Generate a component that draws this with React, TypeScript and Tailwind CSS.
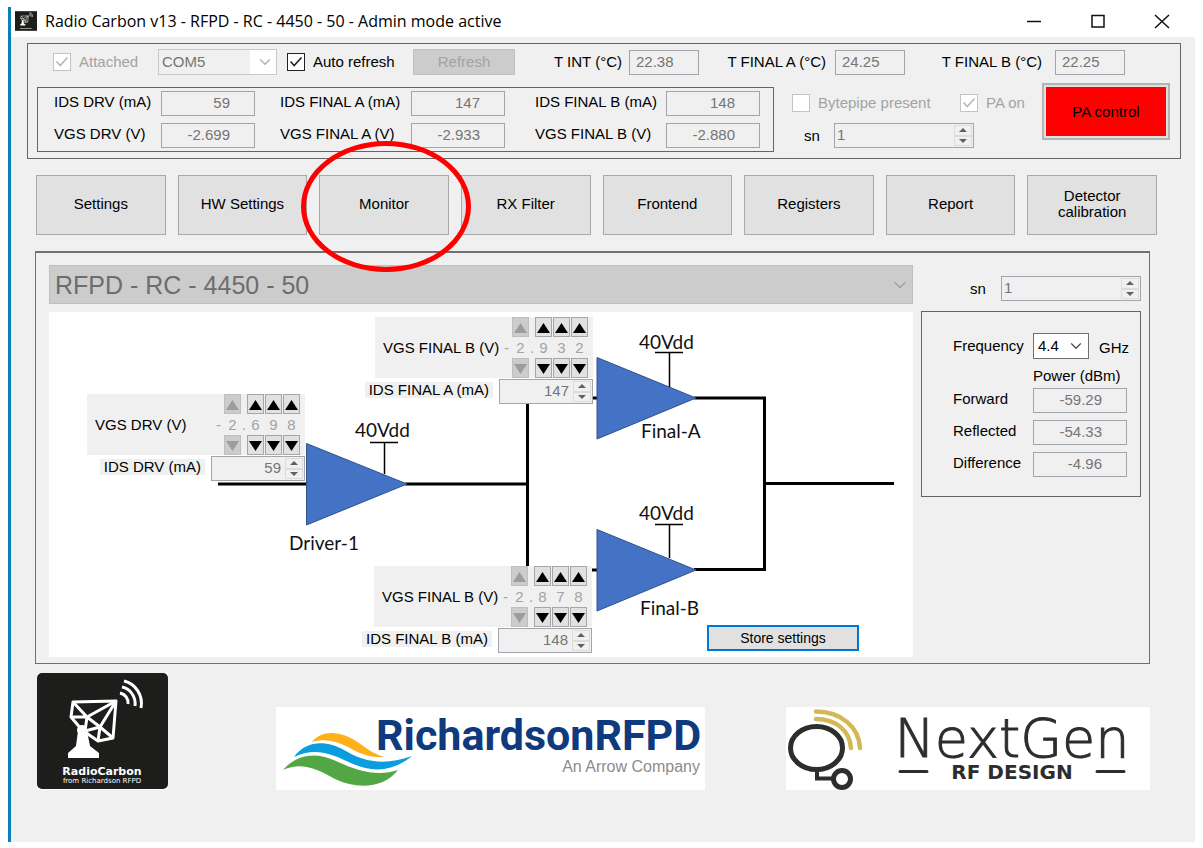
import React, { useId } from "react";
import { ChevronDown } from "lucide-react";

const noop = () => {};

function Tick({ label, checked, disabled }: { label: string; checked?: boolean; disabled?: boolean }) {
  return (
    <label className={disabled ? "flex items-center gap-2 text-[#a3a3a3]" : "flex items-center gap-2 text-black"}>
      <span className="relative block size-[18px]">
        <input
          type="checkbox"
          checked={!!checked}
          disabled={disabled}
          onChange={noop}
          className="block size-[18px] appearance-none border border-[#222] bg-white disabled:border-[#c4c4c4]"
        />
        {checked && (
          <svg viewBox="0 0 18 18" className="pointer-events-none absolute inset-0 size-[18px]" fill="none" stroke={disabled ? "#b8b8b8" : "#222"} strokeWidth="1.6">
            <path d="M3.5 8.5 7.2 12.5 14.5 4.5" />
          </svg>
        )}
      </span>
      {label}
    </label>
  );
}

function ReadOut({ id, value, className }: { id: string; value: string; className: string }) {
  return (
    <input
      id={id}
      value={value}
      disabled
      readOnly
      className={"h-[25px] border border-[#a4a4ac] bg-[#f0f0f0] pb-[2px] text-[#757575] " + className}
    />
  );
}

function Numeric({ id, value, className, inputClass }: { id: string; value: string; className: string; inputClass: string }) {
  return (
    <div className={"flex h-[25px] border border-[#a4a4ac] bg-[#f0f0f0] p-px " + className}>
      <input id={id} value={value} disabled readOnly className={"min-w-0 flex-1 bg-transparent pb-[2px] text-[#757575] " + inputClass} />
      <div className="grid w-[18px] shrink-0 grid-rows-2">
        <button type="button" aria-label="Increase" className="flex items-center justify-center border border-[#dcdcdc]">
          <svg width="8" height="4" viewBox="0 0 8 4"><path d="M0 4 4 0 8 4Z" fill="#606060" /></svg>
        </button>
        <button type="button" aria-label="Decrease" className="flex items-center justify-center border border-[#dcdcdc]">
          <svg width="8" height="4" viewBox="0 0 8 4"><path d="M0 0 4 4 8 0Z" fill="#606060" /></svg>
        </button>
      </div>
    </div>
  );
}

function Measure({ label, value, className, labelClass }: { label: string; value: string; className: string; labelClass: string }) {
  const id = useId();
  return (
    <div className={"flex " + className}>
      <label htmlFor={id} className={"pt-px " + labelClass}>{label}</label>
      <ReadOut id={id} value={value} className="w-[94px] pr-6 text-right" />
    </div>
  );
}

function Temperature({ label, value, className }: { label: string; value: string; className: string }) {
  const id = useId();
  return (
    <>
      <label htmlFor={id} className={"shrink-0 text-right " + className}>{label}</label>
      <ReadOut id={id} value={value} className="w-[70px] pl-[6px]" />
    </>
  );
}

function Arrow({ down, disabled }: { down?: boolean; disabled?: boolean }) {
  return (
    <button
      type="button"
      disabled={disabled}
      aria-label={down ? "Decrease digit" : "Increase digit"}
      className="flex h-5 w-[17px] items-center justify-center border border-[#a6a6a6] bg-[#e1e1e1] text-black disabled:border-[#bfbfbf] disabled:bg-[#cccccc] disabled:text-[#9d9d9d]"
    >
      <svg width="13" height="11" viewBox="0 0 13 11" className="shrink-0">
        <path d={down ? "M0 1H13L6.5 11Z" : "M0 11H13L6.5 1Z"} fill="currentColor" />
      </svg>
    </button>
  );
}

function Digit({ value, disabled }: { value: string; disabled?: boolean }) {
  return (
    <div className="flex w-[17px] flex-col items-center">
      <Arrow disabled={disabled} />
      <span className="h-[21px] leading-[22px]">{value}</span>
      <Arrow down disabled={disabled} />
    </div>
  );
}

function Bias({ title, digits, idsLabel, ids, place }: { title: string; digits: string; idsLabel: string; ids: string; place: string }) {
  const id = useId();
  return (
    <div className={"absolute w-[218px] " + place}>
      <div className="flex h-[61px] items-center bg-[#f0f0f0] pl-2 text-[#a3a3a3]">
        <span className="flex-1 text-black">{title}</span>
        <span className="w-2">-</span>
        <Digit value={digits[0]} disabled />
        <span className="w-[6px] text-center">.</span>
        <div className="mr-[5px] flex gap-px">
          {digits.slice(1).split("").map((d, i) => (
            <Digit key={i} value={d} />
          ))}
        </div>
      </div>
      <div className="flex items-start justify-end gap-[6px] pt-px">
        <label htmlFor={id} className="mt-[3px] shrink-0 bg-[#f0f0f0] px-1 leading-4">{idsLabel}</label>
        <Numeric id={id} value={ids} className="w-[94px] shrink-0" inputClass="pr-[4px] text-right" />
      </div>
    </div>
  );
}

function Diagram() {
  return (
    <svg width="864" height="345" viewBox="49 312 864 345" className="block shrink-0">
      <g fill="none" stroke="#000" strokeWidth="3">
        <path d="M218 484H307M405 484H527M527.5 400V568M592 398H598M592 570H598M694 398H764.5V569.5H694M764 483.5H894" />
      </g>
      <g fill="#4472c4" stroke="#2f528f" strokeWidth="1">
        <path d="M306.500 443.500 407 484 306.500 525Z" />
        <path d="M597 357.500 696 398 597 439Z" />
        <path d="M597 529.500 696 570 597 611Z" />
      </g>
      <path d="M370 442.500H398M384.500 442V474M655 352.500H683M669.500 352V387M655 524.500H683M669.500 524V558" fill="none" stroke="#000" strokeWidth="1.500" />
      <g className="font-['Lato',sans-serif] text-[19px]" fill="#111">
        <text x="355" y="437">40Vdd</text>
        <text x="639" y="349">40Vdd</text>
        <text x="639" y="520">40Vdd</text>
        <text x="289" y="550">Driver-1</text>
        <text x="641" y="438">Final-A</text>
        <text x="640" y="615">Final-B</text>
      </g>
    </svg>
  );
}

function Dish() {
  return (
    <>
      <g fill="none" stroke="#fff" strokeWidth="3" strokeLinejoin="round">
        <path d="M36 29 79 28 76 65 61 68 45 57 34 44Z" />
        <path d="M36 29 50 44 63 54 76 65M79 28 50 44 34 44M79 28 63 54 61 68M50 44 48 58 63 54" />
      </g>
      <circle cx="45" cy="57" r="5" fill="#fff" />
      <path d="M41 58H50L53 73 62 80V85H31V80L39 73Z" fill="#fff" />
      <g fill="none" stroke="#fff" strokeWidth="3">
        <path d="M83 20A10 10 0 0 1 91 31M85 14A16 17 0 0 1 98 33M87 8A22 23 0 0 1 104 35" />
      </g>
    </>
  );
}

function RadioCarbonLogo() {
  return (
    <svg width="131" height="117" viewBox="0 0 131 117" role="img" aria-label="RadioCarbon">
      <rect width="131" height="117" fill="#fff" />
      <rect width="131" height="116" rx="5" fill="#1d1d1b" />
      <Dish />
      <g fill="#fff" textAnchor="middle">
        <text x="65" y="102" className="font-['DejaVu_Sans',sans-serif] text-[11px] font-bold">RadioCarbon</text>
        <text x="65" y="110" className="font-['DejaVu_Sans',sans-serif] text-[7px]">from Richardson RFPD</text>
      </g>
    </svg>
  );
}

function RichardsonLogo() {
  return (
    <svg width="429" height="83" viewBox="0 0 429 83" role="img" aria-label="RichardsonRFPD">
      <rect width="429" height="83" fill="#fff" />
      <path d="M36 35C46 22 66 24 83 36C92 43 101 48 108 50C96 51 84 47 74 41C61 34 48 31 36 35Z" fill="#fdb019" />
      <path d="M18 50C31 32 52 34 68 43C88 55 108 59 136 49C118 64 98 66 77 57C58 48 40 39 18 50Z" fill="#0a9ede" />
      <path d="M7 63C22 46 41 45 60 54C81 64 102 70 122 63C108 81 82 83 59 72C39 61 25 55 7 63Z" fill="#52a744" />
      <text x="100" y="43" className="font-['Roboto',sans-serif] text-[43px] font-bold" fill="#0f3a7d">RichardsonRFPD</text>
      <text x="424" y="65" textAnchor="end" className="font-['Liberation_Sans',sans-serif] text-[16px]" fill="#8c8c8c">An Arrow Company</text>
    </svg>
  );
}

function NextGenLogo() {
  return (
    <svg width="364" height="83" viewBox="0 0 364 83" role="img" aria-label="NextGen RF Design">
      <rect width="364" height="83" fill="#fff" />
      <g fill="none" stroke="#2d2d2d" strokeWidth="5">
        <ellipse cx="30.500" cy="41" rx="26" ry="21.500" />
        <circle cx="56" cy="72" r="8.500" />
        <path d="M31 63V71.500H47" strokeWidth="4" />
      </g>
      <g fill="none" stroke="#d3b955" strokeWidth="4.500" strokeLinecap="round">
        <path d="M30 4.500C55 4.500 73 20 74 41M30 12C50 12 64 24 65 41" />
      </g>
      <text x="226" y="50" textAnchor="middle" className="font-['DejaVu_Sans',sans-serif] text-[54px] font-extralight" fill="#2d2d2d" stroke="#2d2d2d" strokeWidth="1">NextGen</text>
      <path d="M114 64.500H141M311 64.500H338" stroke="#2d2d2d" strokeWidth="3" strokeLinecap="round" />
      <text x="226" y="72" textAnchor="middle" className="font-['DejaVu_Sans',sans-serif] text-[20px] font-bold" fill="#2d2d2d">RF DESIGN</text>
    </svg>
  );
}

const pages = ["Settings", "HW Settings", "Monitor", "RX Filter", "Frontend", "Registers", "Report", "Detector calibration"];

export default function App() {
  return (
    <div className="flex min-h-screen bg-white pt-[7px] pr-2 pb-[6px] pl-2 font-['Liberation_Sans',Arial,sans-serif] text-[15px] leading-5 text-black">
      <div className="flex min-w-0 flex-1 flex-col border-l-[3px] border-[#0b7fb8]">
        <header className="flex h-[30px] items-center bg-white pb-[3px] pl-1">
          <svg width="22" height="20" viewBox="0 0 131 117" aria-hidden="true">
            <rect width="131" height="117" fill="#1d1d1b" />
            <Dish />
            <path d="M30 103H100" stroke="#aaa" strokeWidth="5" />
          </svg>
          <h1 className="ml-2 flex-1 font-['Open_Sans','Noto_Sans',sans-serif] text-[16px]">Radio Carbon v13 - RFPD - RC - 4450 - 50 - Admin mode active</h1>
          <div className="mr-[25px] flex items-center gap-[48px]">
            <button type="button" aria-label="Minimize" className="block size-4">
              <svg viewBox="0 0 16 16"><path d="M1 8.500H15" stroke="#111" strokeWidth="1.500" /></svg>
            </button>
            <button type="button" aria-label="Maximize" className="block size-4">
              <svg viewBox="0 0 16 16"><path d="M2 2.500H14V14H2Z" stroke="#111" strokeWidth="1.500" fill="none" /></svg>
            </button>
            <button type="button" aria-label="Close" className="block size-4">
              <svg viewBox="0 0 16 16"><path d="M1 2 15 15M15 2 1 15" stroke="#111" strokeWidth="1.500" /></svg>
            </button>
          </div>
        </header>

        <div className="flex-1 bg-[#f0f0f0] pt-[6px] pr-[14px] pl-4">
          <section className="border border-[#646464] pt-1 pb-[6px]">
            <div className="flex h-7 items-center pl-[25px]">
              <div className="w-[105px] shrink-0"><Tick label="Attached" checked disabled /></div>
              <div className="relative w-[119px] shrink-0">
                <select aria-label="Port" disabled className="h-[26px] w-full appearance-none border border-[#c8c8c8] bg-white bg-linear-to-r from-[#f0f0f0] from-78% to-white to-78% pl-[3px] text-[#757575] opacity-100">
                  <option>COM5</option>
                </select>
                <ChevronDown size={18} strokeWidth={1.75} className="pointer-events-none absolute top-1 right-[3px] text-[#b0b0b0]" />
              </div>
              <div className="ml-[10px] w-[126px] shrink-0"><Tick label="Auto refresh" checked /></div>
              <button type="button" disabled className="h-[26px] w-[102px] shrink-0 border border-[#bfbfbf] bg-[#cccccc] text-[#a3a3a3]">Refresh</button>
              <Temperature label="T INT (°C)" value="22.38" className="mr-[7px] w-[107px]" />
              <Temperature label="T FINAL A (°C)" value="24.25" className="mr-[9px] w-[127px]" />
              <Temperature label="T FINAL B (°C)" value="22.25" className="mr-[13px] w-[137px]" />
            </div>
            <div className="mt-[11px] ml-[9px] flex items-start">
              <div className="grid w-[737px] shrink-0 gap-[7px] border border-[#646464] py-[3px] pl-4">
                <div className="flex">
                  <Measure label="IDS DRV (mA)" value="59" className="mr-[25px]" labelClass="w-[107px]" />
                  <Measure label="IDS FINAL A (mA)" value="147" className="mr-[30px]" labelClass="w-[131px]" />
                  <Measure label="IDS FINAL B (mA)" value="148" className="" labelClass="w-[131px]" />
                </div>
                <div className="flex">
                  <Measure label="VGS DRV (V)" value="-2.699" className="mr-[25px]" labelClass="w-[107px]" />
                  <Measure label="VGS FINAL A (V)" value="-2.933" className="mr-[30px]" labelClass="w-[131px]" />
                  <Measure label="VGS FINAL B (V)" value="-2.880" className="" labelClass="w-[131px]" />
                </div>
              </div>
              <div className="ml-[18px] w-[250px] shrink-0 pt-[6px]">
                <div className="flex h-5 items-center">
                  <div className="w-[168px]"><Tick label="Bytepipe present" disabled /></div>
                  <Tick label="PA on" checked disabled />
                </div>
                <div className="mt-[10px] flex items-center pl-3">
                  <label htmlFor="sn-top" className="w-[30px]">sn</label>
                  <Numeric id="sn-top" value="1" className="w-[140px]" inputClass="pl-px" />
                </div>
              </div>
              <button type="button" className="-mt-1 h-[57px] w-[128px] shrink-0 border-2 border-[#b4b4b4] bg-[#e1e1e1] p-[2px]">
                <span className="flex h-full items-center justify-center bg-[#ff0000]">PA control</span>
              </button>
            </div>
          </section>

          <nav className="mt-4 mr-6 ml-[9px] grid grid-cols-8 gap-3">
            {pages.map((p) => (
              <div key={p} className="relative">
                <button type="button" className="h-[60px] w-full border border-[#a9a9a9] bg-[#e1e1e1] px-5 pb-[2px] leading-4">{p}</button>
                {p === "Monitor" && (
                  <span className="pointer-events-none absolute -top-[34px] -left-[18px] z-10 h-[131px] w-[170px] rounded-[50%] border-[5px] border-[#ff0000]" />
                )}
              </div>
            ))}
          </nav>

          <main className="mt-4 mr-[31px] ml-2 grid grid-cols-[1fr_220px] gap-x-2 border border-t-2 border-[#707070] pt-3 pr-2 pb-[6px] pl-[13px]">
            <div className="min-w-0">
              <div className="relative">
                <select aria-label="Device" disabled className="h-[39px] w-full appearance-none border border-[#bfbfbf] bg-[#cccccc] pl-[5px] text-[25px] text-[#6d6d6d] opacity-100">
                  <option>RFPD - RC - 4450 - 50</option>
                </select>
                <ChevronDown size={20} strokeWidth={1.5} className="pointer-events-none absolute top-[10px] right-[3px] text-[#a0a0a0]" />
              </div>
              <div className="relative mt-2 overflow-hidden bg-white">
                <Diagram />
                <Bias title="VGS DRV (V)" digits="2698" idsLabel="IDS DRV (mA)" ids="59" place="top-[82px] left-[38px]" />
                <Bias title="VGS FINAL B (V)" digits="2932" idsLabel="IDS FINAL A (mA)" ids="147" place="top-[5px] left-[326px]" />
                <Bias title="VGS FINAL B (V)" digits="2878" idsLabel="IDS FINAL B (mA)" ids="148" place="top-[254px] left-[325px]" />
                <button type="button" className="absolute top-[313px] left-[658px] h-[26px] w-[152px] border-2 border-[#0078d7] bg-[#e1e1e1] text-[14px]">Store settings</button>
              </div>
            </div>
            <div>
              <div className="flex items-center justify-end pt-[11px]">
                <label htmlFor="sn-main" className="w-[31px]">sn</label>
                <Numeric id="sn-main" value="1" className="w-[140px]" inputClass="pl-px" />
              </div>
              <section className="mt-[10px] h-[186px] border border-[#646464] pt-[21px] pl-[31px]">
                <div className="flex items-center">
                  <label htmlFor="freq" className="w-20">Frequency</label>
                  <div className="relative w-14">
                    <select id="freq" className="h-[26px] w-full appearance-none border border-[#707070] bg-white pb-px pl-1" defaultValue="4.4">
                      <option>4.4</option>
                    </select>
                    <ChevronDown size={18} strokeWidth={1.5} className="pointer-events-none absolute top-1 right-[4px] text-[#444]" />
                  </div>
                  <span className="ml-[10px] pt-1">GHz</span>
                </div>
                <div className="mt-[7px] pl-20">Power (dBm)</div>
                <div className="mt-[2px] grid gap-[7px]">
                  <Measure label="Forward" value="-59.29" className="" labelClass="w-20" />
                  <Measure label="Reflected" value="-54.33" className="" labelClass="w-20" />
                  <Measure label="Difference" value="-4.96" className="" labelClass="w-20" />
                </div>
              </section>
            </div>
          </main>

          <footer className="mt-[9px] ml-[10px] flex items-end">
            <RadioCarbonLogo />
            <div className="ml-[108px]"><RichardsonLogo /></div>
            <div className="ml-[81px]"><NextGenLogo /></div>
          </footer>
        </div>
      </div>
    </div>
  );
}
